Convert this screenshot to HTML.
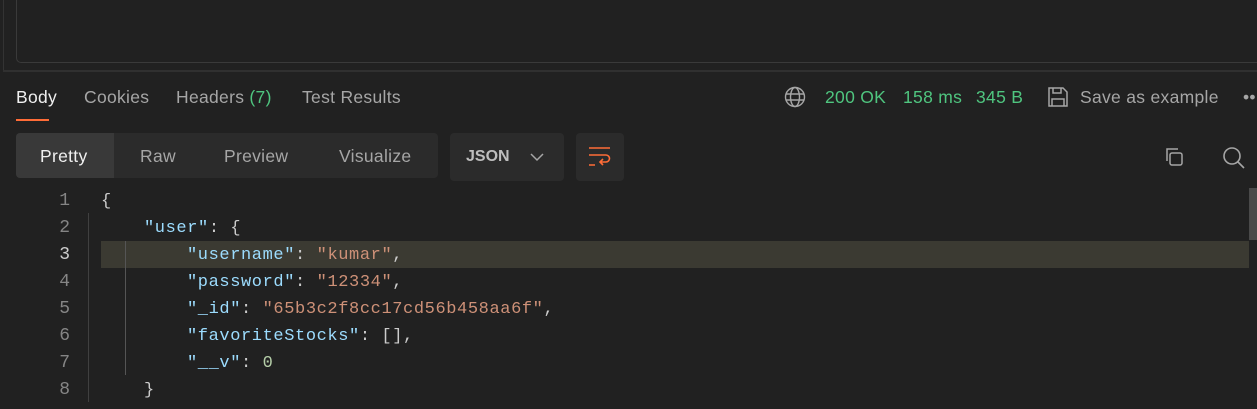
<!DOCTYPE html>
<html><head><meta charset="utf-8"><style>
*{margin:0;padding:0;box-sizing:border-box}
body{width:1257px;height:409px;background:#212121;overflow:hidden;position:relative;font-family:"Liberation Sans",sans-serif;color:#a6a6a6}
.a{position:absolute}
.t{font-size:17.5px;letter-spacing:0.3px}
.code{font-family:"Liberation Mono",monospace;font-size:17px;letter-spacing:0.6px;white-space:pre;color:#cccccc}
.k{color:#9cdcfe}.s{color:#ce9178}.n{color:#b5cea8}
.ln{position:absolute;left:40px;width:30px;text-align:right;font-family:"Liberation Mono",monospace;font-size:18px;color:#858585}
</style></head><body>
<div class="a" style="left:3px;top:0;width:1px;height:71px;background:#333"></div>
<div class="a" style="left:16px;top:-5px;width:1260px;height:68px;border:1px solid #3a3a3a;border-radius:5px"></div>
<div class="a" style="left:3px;top:70px;width:1254px;height:2px;background:#303030"></div>

<div class="a t" style="left:16px;top:87px;color:#f0f0f0">Body</div>
<div class="a" style="left:16px;top:119px;width:33px;height:2px;background:#ff6c37"></div>
<div class="a t" style="left:84px;top:87px">Cookies</div>
<div class="a t" style="left:176px;top:87px">Headers <span style="color:#4fc57f">(7)</span></div>
<div class="a t" style="left:302px;top:87px">Test Results</div>

<svg class="a" style="left:784px;top:86px" width="22" height="22" viewBox="0 0 22 22" fill="none" stroke="#a6a6a6" stroke-width="1.4"><circle cx="11" cy="11" r="9.5"/><ellipse cx="11" cy="11" rx="4.5" ry="9.5"/><path d="M2 8h18M2 14h18"/></svg>
<div class="a t" style="left:825px;top:87px;color:#4fc57f">200 OK</div>
<div class="a t" style="left:903px;top:87px;color:#4fc57f">158 ms</div>
<div class="a t" style="left:976px;top:87px;color:#4fc57f">345 B</div>
<svg class="a" style="left:1047px;top:86px" width="22" height="22" viewBox="0 0 22 22" fill="none" stroke="#a6a6a6" stroke-width="1.5"><path d="M2 2h14l4 4v14H2z"/><path d="M6 2v5h8V2M5 20v-7h12v7"/></svg>
<div class="a t" style="left:1080px;top:87px">Save as example</div>
<div class="a t" style="left:1243px;top:87px">••</div>

<div class="a" style="left:16px;top:133px;width:422px;height:45px;background:#2b2b2b;border-radius:4px"></div>
<div class="a" style="left:16px;top:133px;width:98px;height:45px;background:#393939;border-radius:4px 0 0 4px"></div>
<div class="a t" style="left:40px;top:146px;color:#f0f0f0">Pretty</div>
<div class="a t" style="left:140px;top:146px">Raw</div>
<div class="a t" style="left:224px;top:146px">Preview</div>
<div class="a t" style="left:339px;top:146px">Visualize</div>
<div class="a" style="left:450px;top:133px;width:114px;height:48px;background:#2b2b2b;border-radius:4px"></div>
<div class="a" style="left:466px;top:148px;font-size:16px;font-weight:bold;color:#bdbdbd">JSON</div>
<svg class="a" style="left:530px;top:153px" width="14" height="9" viewBox="0 0 14 9" fill="none" stroke="#a6a6a6" stroke-width="1.5"><path d="M1 1l6 6 6-6"/></svg>
<div class="a" style="left:576px;top:133px;width:48px;height:48px;background:#2b2b2b;border-radius:4px"></div>
<svg class="a" style="left:588px;top:146px" width="24" height="22" viewBox="0 0 24 22" fill="none" stroke="#ff6c37" stroke-width="1.6"><path d="M1 2h21M1 9h17a3.5 3.5 0 010 7h-6M15 13l-3 3 3 3M1 19h6"/></svg>

<svg class="a" style="left:1163px;top:146px" width="22" height="22" viewBox="0 0 22 22" fill="none" stroke="#a6a6a6" stroke-width="1.5"><path d="M4 15V3h11"/><rect x="7" y="7" width="12" height="12" rx="2"/></svg>
<svg class="a" style="left:1222px;top:146px" width="24" height="24" viewBox="0 0 24 24" fill="none" stroke="#a6a6a6" stroke-width="1.6"><circle cx="10" cy="10" r="8"/><path d="M16 16l6 6"/></svg>
<div class="a" style="left:1249px;top:188px;width:8px;height:52px;background:#4a4a4a"></div>

<div class="a" style="left:101px;top:241px;width:1148px;height:27px;background:#3b3a32"></div>
<div class="a" style="left:88px;top:213px;width:1px;height:189px;background:#404040"></div>
<div class="a" style="left:125px;top:241px;width:1px;height:134px;background:#555"></div>

<div class="ln" style="top:191px">1</div>
<div class="ln" style="top:218px">2</div>
<div class="ln" style="top:245px;color:#cccccc">3</div>
<div class="ln" style="top:272px">4</div>
<div class="ln" style="top:299px">5</div>
<div class="ln" style="top:326px">6</div>
<div class="ln" style="top:353px">7</div>
<div class="ln" style="top:380px">8</div>

<div class="a code" style="left:101px;top:192px">{</div>
<div class="a code" style="left:144px;top:219px"><span class="k">"user"</span>: {</div>
<div class="a code" style="left:187px;top:246px"><span class="k">"username"</span>: <span class="s">"kumar"</span>,</div>
<div class="a code" style="left:187px;top:273px"><span class="k">"password"</span>: <span class="s">"12334"</span>,</div>
<div class="a code" style="left:187px;top:300px"><span class="k">"_id"</span>: <span class="s">"65b3c2f8cc17cd56b458aa6f"</span>,</div>
<div class="a code" style="left:187px;top:327px"><span class="k">"favoriteStocks"</span>: [],</div>
<div class="a code" style="left:187px;top:354px"><span class="k">"__v"</span>: <span class="n">0</span></div>
<div class="a code" style="left:144px;top:381px">}</div>
</body></html>
